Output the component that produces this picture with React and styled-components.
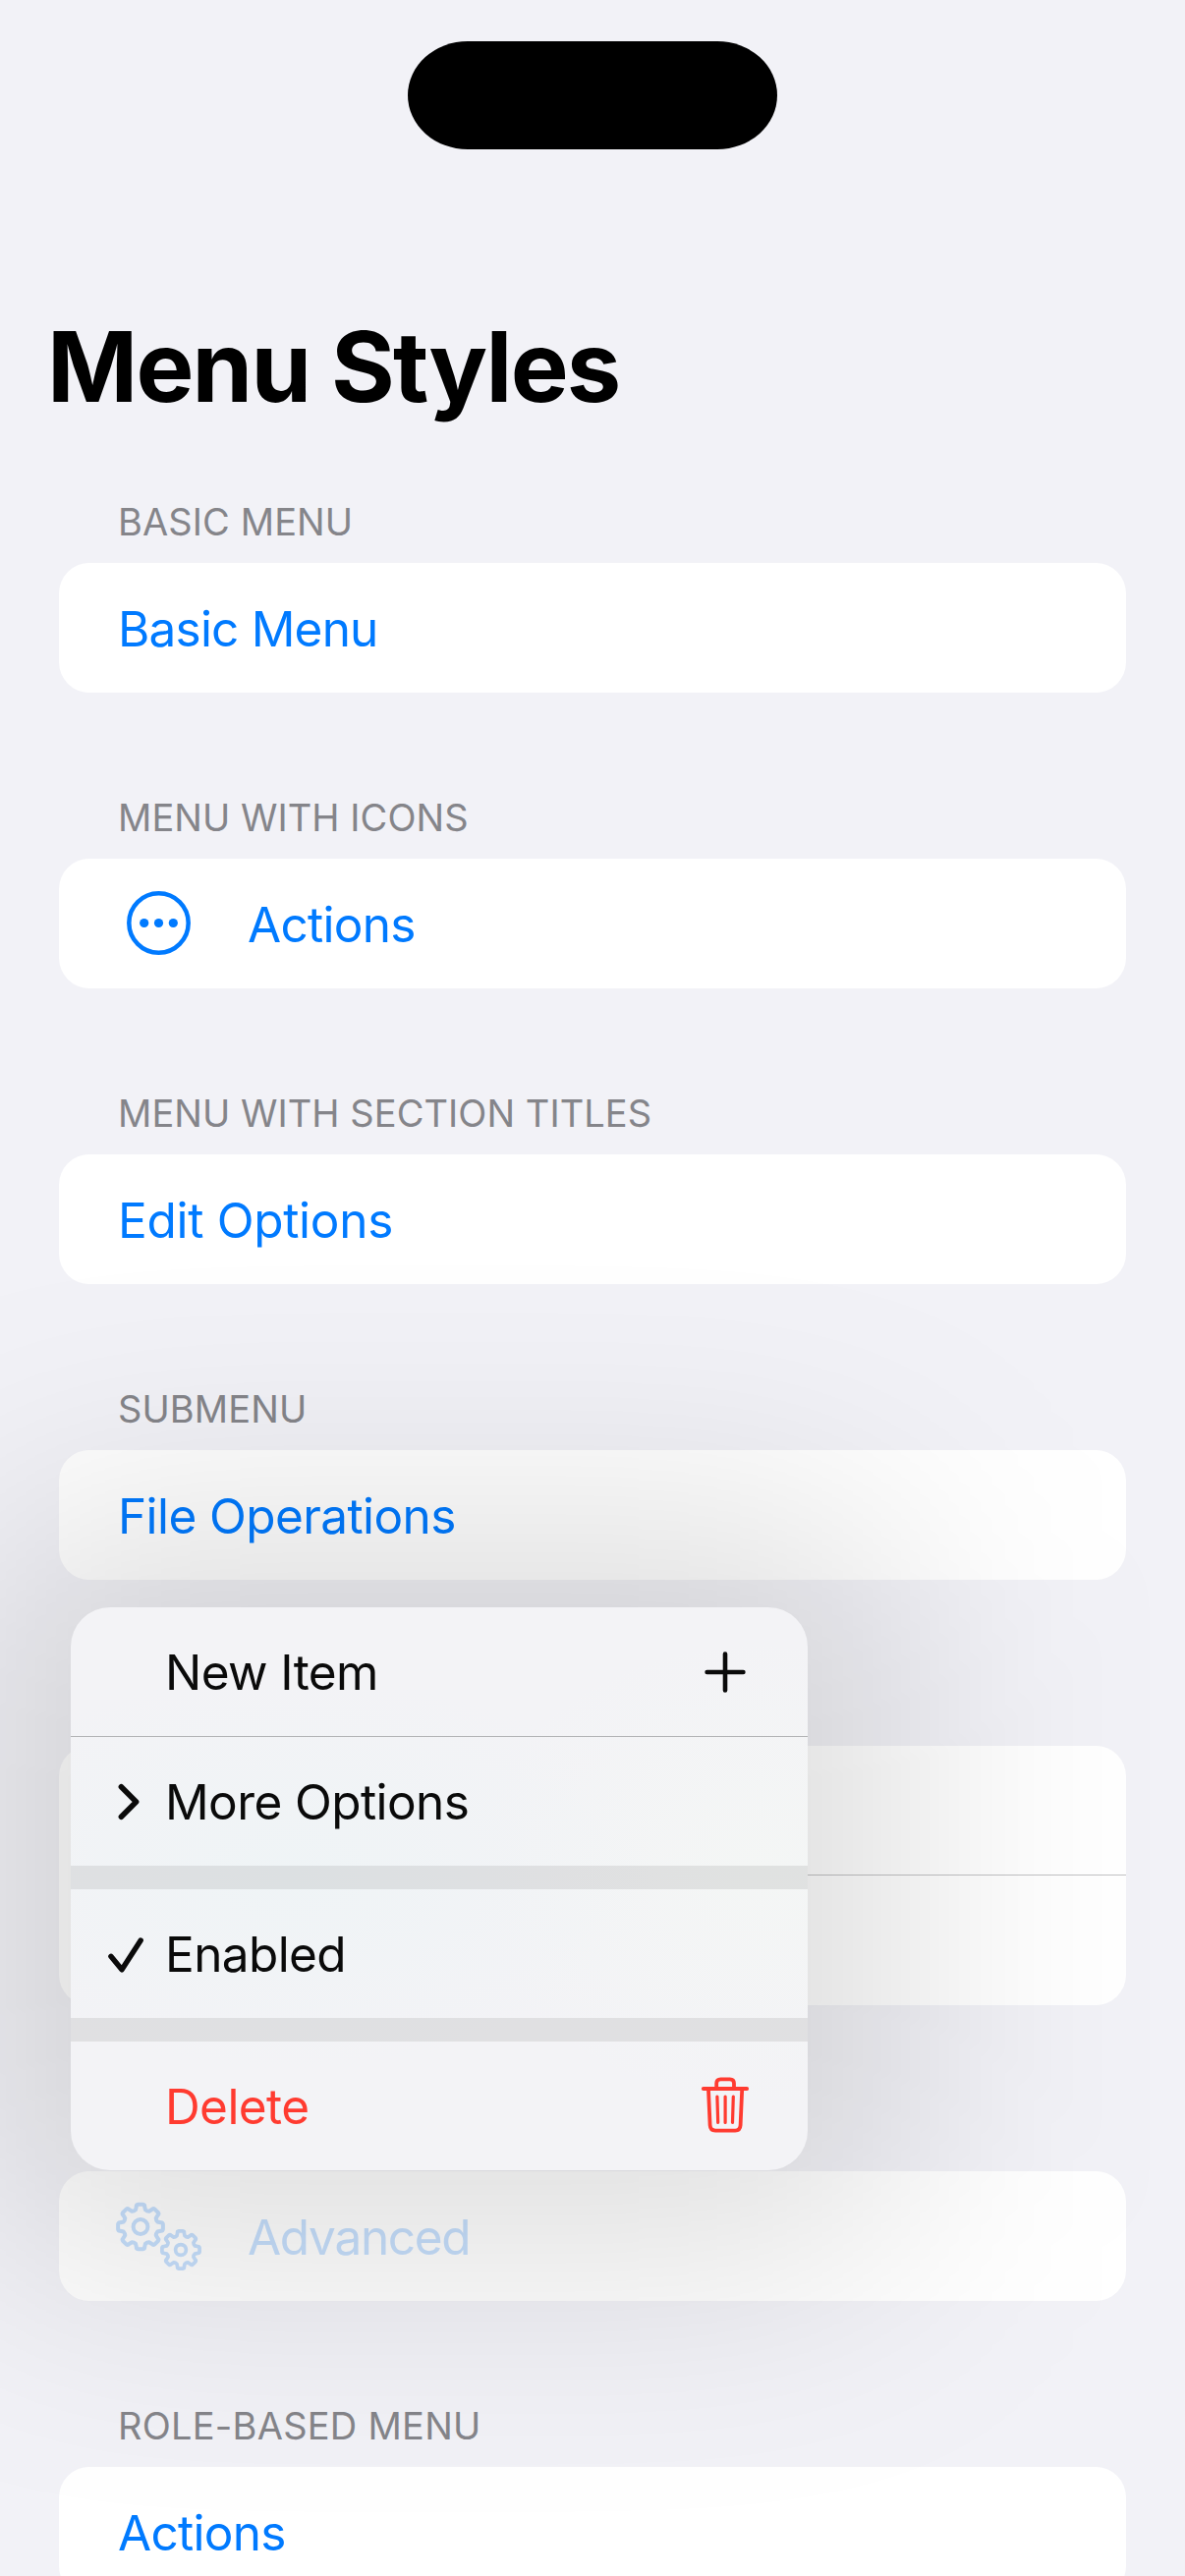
import React from "react";
import styled, { createGlobalStyle, css } from "styled-components";

const GlobalStyle = createGlobalStyle`
  html, body { margin: 0; padding: 0; background: #f2f2f7; }
  * { box-sizing: border-box; }
`;

const Screen = styled.main`
  width: 1206px;
  height: 2622px;
  overflow: hidden;
  background: #f2f2f7;
  font-family: Inter, "Liberation Sans", sans-serif;
`;

const StatusBar = styled.header`
  height: 177px;
  padding-top: 42px;
  display: flex;
  justify-content: center;
`;

const Island = styled.div`
  width: 376px;
  height: 110px;
  border-radius: 61px / 55px;
  background: #000;
`;

const Title = styled.h1`
  margin: 0;
  padding: 136px 0 0 48px;
  height: 315px;
  font-size: 99px;
  line-height: 120px;
  font-weight: 700;
  letter-spacing: -1.8px;
  color: #000;
  white-space: nowrap;
`;

const List = styled.div`
  padding: 0 60px;
`;

const Section = styled.section`
  position: relative;
  margin-bottom: 88px;
`;

const SectionTitle = styled.h2`
  margin: 0;
  height: 81px;
  padding: 19px 60px 0;
  font-size: 38px;
  line-height: 40px;
  font-weight: 400;
  letter-spacing: ${(p) => p.$tracking}px;
  color: #85858a;
  white-space: nowrap;
`;

const Card = styled.div`
  background: #fff;
  border-radius: 31px;
  overflow: hidden;
`;

const Row = styled.button`
  display: flex;
  align-items: center;
  width: 100%;
  height: ${(p) => (p.$divided ? 131 : 132)}px;
  padding: 2px 60px 0;
  border: 0;
  background: none;
  font: inherit;
  font-size: 49.5px;
  line-height: 60px;
  letter-spacing: ${(p) => p.$tracking}px;
  text-align: left;
  white-space: nowrap;
  color: ${(p) => (p.$disabled ? "#c7e0fd" : "#007aff")};
`;

const Divider = styled.div`
  height: 1px;
  margin-left: 60px;
  background: #c2c2c4;
`;

const RowIcon = styled.span`
  width: 132px;
  height: 80px;
  display: flex;
  margin-top: -2px;
  flex: none;
  svg {
    display: block;
    overflow: visible;
  }
`;

const Menu = styled.div`
  position: absolute;
  z-index: 2;
  left: 12px;
  top: 241px;
  width: 750px;
  border-radius: 40px;
  &::before {
    content: "";
    position: absolute;
    inset: -90px;
    z-index: -1;
    border-radius: 90px;
    background: rgba(0, 0, 0, 0.132);
    filter: blur(130px);
  }
`;

const MenuBody = styled.div`
  border-radius: 40px;
  overflow: hidden;
  background:
    radial-gradient(ellipse 380px 200px at 220px 270px, #eff4f6 0%, rgba(239, 244, 246, 0) 100%),
    radial-gradient(ellipse 300px 240px at 700px 270px, #f4f6f5 0%, rgba(244, 246, 245, 0) 100%),
    #f3f3f6;
`;

const MenuItem = styled.div`
  display: flex;
  align-items: center;
  height: ${(p) => (p.$divided ? 132 : 131)}px;
  padding: 1px 54px 0 36px;
  font-size: 49.5px;
  line-height: 60px;
  letter-spacing: -0.6px;
  white-space: nowrap;
  color: ${(p) => (p.$destructive ? "#ff3b30" : "#0a0a0a")};
  ${(p) =>
    p.$divided &&
    css`
      border-bottom: 1px solid #b2b3b5;
    `}
`;

const Leading = styled.span`
  width: 60px;
  display: flex;
`;

const Label = styled.span`
  flex: 1;
`;

const Trailing = styled.span`
  width: 60px;
  display: flex;
`;

const MenuGap = styled.div`
  height: 24px;
  background: rgba(0, 0, 0, 0.078);
`;

const EllipsisCircle = () => (
  <svg width="84" height="80" viewBox="0 0 84 80" fill="currentColor">
    <circle cx="41.5" cy="39.5" r="30.2" fill="none" stroke="currentColor" strokeWidth="4.5" />
    <circle cx="26.7" cy="39.5" r="4.6" />
    <circle cx="41.5" cy="39.5" r="4.6" />
    <circle cx="56.3" cy="39.5" r="4.6" />
  </svg>
);

const gearPath = (cx, cy, tip, root) => {
  const at = (r, deg) => {
    const a = (deg * Math.PI) / 180;
    return `${(cx + r * Math.cos(a)).toFixed(2)} ${(cy + r * Math.sin(a)).toFixed(2)}`;
  };
  let d = "";
  for (let i = 0; i < 8; i += 1) {
    const a = i * 45;
    d += `${i ? "L" : "M"}${at(root, a - 16)}L${at(tip - 2, a - 11.5)}Q${at(tip, a - 11)} ${at(tip, a - 6)}`;
    d += `L${at(tip, a + 6)}Q${at(tip, a + 11)} ${at(tip - 2, a + 11.5)}L${at(root, a + 16)}Q${at(root - 0.8, a + 22.5)} ${at(root, a + 29)}`;
  }
  return `${d}Z`;
};

const Gears = () => (
  <svg width="90" height="80" viewBox="0 0 90 80" fill="none" stroke="currentColor" strokeLinejoin="round">
    <path d={gearPath(23, 30.5, 23, 18)} strokeWidth="4" />
    <circle cx="23" cy="30.5" r="7.4" strokeWidth="4" />
    <path d={gearPath(64, 54, 19.2, 14.8)} strokeWidth="3.7" />
    <circle cx="64" cy="54" r="5.4" strokeWidth="3.7" />
  </svg>
);

const Chevron = () => (
  <svg width="40" height="60" viewBox="0 0 40 60" fill="none" stroke="currentColor" strokeWidth="5.6" strokeLinecap="round" strokeLinejoin="round">
    <path d="M15.4 14.8 30.6 30 15.4 45.2" />
  </svg>
);

const Check = () => (
  <svg width="50" height="60" viewBox="0 0 50 60" fill="none" stroke="currentColor" strokeWidth="5.4" strokeLinecap="round" strokeLinejoin="round">
    <path d="M4.9 32.3 16 45.8 35.2 16" />
  </svg>
);

const Plus = () => (
  <svg width="60" height="60" viewBox="0 0 60 60" fill="none" stroke="currentColor" strokeWidth="4.6" strokeLinecap="round">
    <path d="M11.6 30H48.4M30 11.6V48.4" />
  </svg>
);

const Trash = () => (
  <svg width="60" height="60" viewBox="0 0 60 60" fill="none" stroke="currentColor" strokeWidth="3.8" strokeLinecap="round" strokeLinejoin="round">
    <path d="M7.8 12H52.2" />
    <path d="M21.2 11V6.6Q21.2 2.4 25.4 2.4H34.8Q39 2.4 39 6.6V11" />
    <path d="M13 13 14.6 49.2Q14.9 54.6 20 54.6H40.2Q45.3 54.6 45.6 49.2L47.2 13" />
    <path d="M21.9 20 22.7 46.4M30.1 20V46.4M38.3 20 37.5 46.4" strokeWidth="3.2" />
  </svg>
);

const FileMenu = () => (
  <Menu>
    <MenuBody>
      <MenuItem $divided>
        <Leading />
        <Label>New Item</Label>
        <Trailing><Plus /></Trailing>
      </MenuItem>
      <MenuItem>
        <Leading><Chevron /></Leading>
        <Label>More Options</Label>
      </MenuItem>
      <MenuGap />
      <MenuItem>
        <Leading><Check /></Leading>
        <Label>Enabled</Label>
      </MenuItem>
      <MenuGap />
      <MenuItem $destructive>
        <Leading />
        <Label>Delete</Label>
        <Trailing><Trash /></Trailing>
      </MenuItem>
    </MenuBody>
  </Menu>
);

const sections = [
  { title: "BASIC MENU", rows: [{ label: "Basic Menu", tracking: -0.8 }] },
  { title: "MENU WITH ICONS", tracking: 0.05, rows: [{ label: "Actions", icon: <EllipsisCircle />, tracking: -0.7 }] },
  { title: "MENU WITH SECTION TITLES", tracking: 0.05, rows: [{ label: "Edit Options", tracking: -0.3 }] },
  { title: "SUBMENU", rows: [{ label: "File Operations" }], menu: true },
  { rows: [{}, {}] },
  { rows: [{ label: "Advanced", icon: <Gears />, disabled: true, tracking: -1.3 }] },
  { title: "ROLE-BASED MENU", tracking: 0.25, rows: [{ label: "Actions", tracking: -0.7 }] },
];

export default function App() {
  return (
    <Screen>
      <GlobalStyle />
      <StatusBar>
        <Island />
      </StatusBar>
      <Title>Menu Styles</Title>
      <List>
        {sections.map((section, i) => (
          <Section key={i}>
            <SectionTitle $tracking={section.tracking ?? 0.1}>{section.title}</SectionTitle>
            <Card>
              {section.rows.map((row, j) => (
                <React.Fragment key={j}>
                  {j > 0 && <Divider />}
                  <Row
                    $disabled={row.disabled}
                    $divided={j < section.rows.length - 1}
                    $tracking={row.tracking ?? -0.6}
                  >
                    {row.icon && <RowIcon>{row.icon}</RowIcon>}
                    {row.label}
                  </Row>
                </React.Fragment>
              ))}
            </Card>
            {section.menu && <FileMenu />}
          </Section>
        ))}
      </List>
    </Screen>
  );
}
